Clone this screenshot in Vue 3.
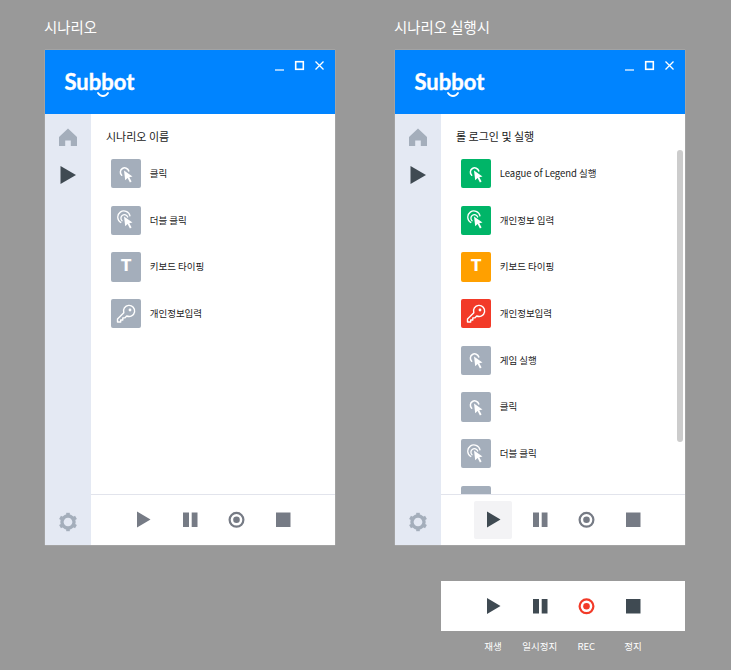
<template>
  <div class="page">
    <div class="screens">
      <section v-for="screen in screens" :key="screen.title" class="screen">
        <h2 class="screen-title">{{ screen.title }}</h2>
        <div class="window">
          <header class="titlebar">
            <div class="logo">
              <span class="logo-text">Subbot</span>
              <svg class="logo-smile" width="12" height="5" viewBox="0 0 12 5">
                <path d="M1 1c1.400 2.200 2.900 3 5 3s3.600-.8 5-3" fill="none" stroke="#fff" stroke-width="1.800" stroke-linecap="round" />
              </svg>
            </div>
            <div class="window-controls">
              <svg width="11" height="11" viewBox="0 0 11 11"><path d="M1 10h9" stroke="#fff" stroke-width="1.200" /></svg>
              <svg width="11" height="11" viewBox="0 0 11 11"><rect x="1.700" y="1.700" width="7.600" height="7.600" fill="none" stroke="#fff" stroke-width="1.600" /></svg>
              <svg width="11" height="11" viewBox="0 0 11 11"><path d="M1.500 1.500l8 8M9.500 1.500l-8 8" stroke="#fff" stroke-width="1.300" /></svg>
            </div>
          </header>

          <div class="body">
            <aside class="sidebar">
              <svg class="side-icon" width="20" height="20" viewBox="0 0 20 20">
                <path d="M10 1.500 19 10v9h-6.200v-5.500H7.200V19H1v-9z" fill="#a4aebb" />
              </svg>
              <svg class="side-icon" width="20" height="20" viewBox="0 0 20 20">
                <path d="M2.500 1 18 10 2.500 19z" fill="#3f4a52" />
              </svg>
              <svg class="side-icon gear" width="20" height="20" viewBox="0 0 20 20">
                <circle cx="10" cy="10" r="6" fill="none" stroke="#a4aebb" stroke-width="3.400" />
                <path v-for="a in [0, 60, 120]" :key="a" d="M8.200 .8h3.600v18.400H8.200z" fill="#a4aebb" :transform="`rotate(${a} 10 10)`" />
                <circle cx="10" cy="10" r="4.300" fill="#e4e9f3" />
              </svg>
            </aside>

            <main class="content">
              <div class="list-area">
                <h3 class="list-title">{{ screen.listTitle }}</h3>
                <ul class="list">
                  <li v-for="(item, i) in screen.items" :key="i" class="item">
                    <span class="item-icon" :class="item.color">
                      <svg v-if="item.icon === 'click'" width="20" height="20" viewBox="0 0 20 20">
                        <path d="M5.700 11.300A4.300 4.300 0 1 1 12.800 7" fill="none" stroke="#fff" stroke-width="1.500" stroke-linecap="round" />
                        <path d="M8 6.500 16.500 12.500l-3.200.7 2.300 4.300-1.700.9-2.300-4.300-2.400 2.200z" fill="#fff" />
                      </svg>
                      <svg v-else-if="item.icon === 'double'" width="20" height="20" viewBox="0 0 20 20">
                        <path d="M4.800 12.500A6.200 6.200 0 1 1 14 5.800" fill="none" stroke="#fff" stroke-width="1.300" stroke-linecap="round" />
                        <path d="M6 10.700A3.500 3.500 0 1 1 11.700 7" fill="none" stroke="#fff" stroke-width="1.300" stroke-linecap="round" />
                        <path d="M8 6.500 16.500 12.500l-3.200.7 2.300 4.300-1.700.9-2.300-4.300-2.400 2.200z" fill="#fff" />
                      </svg>
                      <span v-else-if="item.icon === 'text'" class="glyph-t">T</span>
                      <svg v-else-if="item.icon === 'key'" width="22" height="22" viewBox="0 0 22 22">
                        <path d="M8.800 9.800 2.500 16.100V19h3.200v-2h2.100v-2.100h2l1.900-1.900a5.600 5.600 0 1 0-2.900-3.200z" fill="none" stroke="#fff" stroke-width="1.400" stroke-linejoin="round" />
                        <circle cx="15" cy="7" r="1.400" fill="#fff" />
                      </svg>
                    </span>
                    <span class="item-label">{{ item.label }}</span>
                  </li>
                </ul>
                <div v-if="screen.scroll" class="scrollbar"></div>
              </div>

              <div class="controls">
                <button
                  v-for="c in screen.controls"
                  :key="c.name"
                  class="control"
                  :class="{ active: c.active }"
                >
                  <svg width="18" height="18" viewBox="-0.5 0.5 18 18">
                    <path v-if="c.name === 'play'" d="M2.500 1 16 9 2.500 17z" :fill="c.color" />
                    <path v-else-if="c.name === 'pause'" d="M1.500 2H7.500V16.500H1.500zM10.200 2H16V16.500H10.200z" :fill="c.color" />
                    <template v-else-if="c.name === 'rec'">
                      <circle cx="9" cy="9.300" r="6.900" fill="none" :stroke="c.color" stroke-width="2.200" />
                      <circle cx="9" cy="9.300" r="3.300" :fill="c.color" />
                    </template>
                    <path v-else d="M1.500 2H16V16.500H1.500z" :fill="c.color" />
                  </svg>
                </button>
              </div>
            </main>
          </div>
        </div>
      </section>
    </div>

    <div class="legend">
      <div class="legend-bar">
        <button v-for="c in legend" :key="c.name" class="control">
          <svg width="18" height="18" viewBox="-0.5 0 18 18">
            <path v-if="c.name === 'play'" d="M2.500 1 16 9 2.500 17z" :fill="c.color" />
            <path v-else-if="c.name === 'pause'" d="M1.500 2H7.500V16.500H1.500zM10.200 2H16V16.500H10.200z" :fill="c.color" />
            <template v-else-if="c.name === 'rec'">
              <circle cx="9" cy="9.300" r="6.900" fill="none" :stroke="c.color" stroke-width="2.200" />
              <circle cx="9" cy="9.300" r="3.300" :fill="c.color" />
            </template>
            <path v-else d="M1.500 2H16V16.500H1.500z" :fill="c.color" />
          </svg>
        </button>
      </div>
      <div class="legend-labels">
        <span v-for="c in legend" :key="c.name" class="legend-label">{{ c.label }}</span>
      </div>
    </div>
  </div>
</template>

<script setup>
const GRAY = '#767b85'
const DARK = '#3f4a52'
const RED = '#f23a28'

const idleControls = [
  { name: 'play', color: GRAY },
  { name: 'pause', color: GRAY },
  { name: 'rec', color: GRAY },
  { name: 'stop', color: GRAY }
]

const screens = [
  {
    title: '시나리오',
    listTitle: '시나리오 이름',
    scroll: false,
    controls: idleControls,
    items: [
      { icon: 'click', color: 'gray', label: '클릭' },
      { icon: 'double', color: 'gray', label: '더블 클릭' },
      { icon: 'text', color: 'gray', label: '키보드 타이핑' },
      { icon: 'key', color: 'gray', label: '개인정보입력' }
    ]
  },
  {
    title: '시나리오 실행시',
    listTitle: '롤 로그인 및 실행',
    scroll: true,
    controls: [
      { name: 'play', color: DARK, active: true },
      { name: 'pause', color: GRAY },
      { name: 'rec', color: GRAY },
      { name: 'stop', color: GRAY }
    ],
    items: [
      { icon: 'click', color: 'green', label: 'League of Legend 실행' },
      { icon: 'double', color: 'green', label: '개인정보 입력' },
      { icon: 'text', color: 'orange', label: '키보드 타이핑' },
      { icon: 'key', color: 'red', label: '개인정보입력' },
      { icon: 'click', color: 'gray', label: '게임 실행' },
      { icon: 'click', color: 'gray', label: '클릭' },
      { icon: 'double', color: 'gray', label: '더블 클릭' },
      { icon: 'none', color: 'gray', label: '' }
    ]
  }
]

const legend = [
  { name: 'play', color: DARK, label: '재생' },
  { name: 'pause', color: DARK, label: '일시정지' },
  { name: 'rec', color: RED, label: 'REC' },
  { name: 'stop', color: DARK, label: '정지' }
]
</script>

<style>
html,
body {
  background: #999;
}
</style>

<style scoped>
.page {
  width: 731px;
  height: 670px;
  overflow: hidden;
  box-sizing: border-box;
  padding: 18px 0 0 45px;
  background: #999;
  font-family: "Noto Sans CJK KR", "Noto Sans", sans-serif;
}

.screens {
  display: flex;
  gap: 60px;
}

.screen {
  width: 290px;
}

.screen-title {
  margin: 0 0 0 -1px;
  height: 32px;
  font-size: 14.4px;
  line-height: 18px;
  font-weight: 400;
  color: #fff;
}

.window {
  height: 495px;
  display: flex;
  flex-direction: column;
  background: #fff;
  box-shadow: 0 0 1px rgba(255, 255, 255, 0.6);
}

.titlebar {
  flex: none;
  height: 64px;
  display: flex;
  justify-content: space-between;
  background: #0084ff;
}

.logo {
  position: relative;
  margin: 17px 0 0 19.5px;
  height: 30px;
}

.logo-text {
  font-family: "Lato", sans-serif;
  font-weight: 700;
  font-size: 22px;
  line-height: 30px;
  -webkit-text-stroke: 0.4px #fff;
  color: #fff;
}

.logo-smile {
  position: absolute;
  left: 32px;
  top: 25px;
}

.window-controls {
  display: flex;
  gap: 9px;
  margin: 10px 10px 0 0;
  height: 11px;
}

.body {
  flex: 1;
  min-height: 0;
  display: flex;
}

.sidebar {
  flex: none;
  width: 46px;
  display: flex;
  flex-direction: column;
  align-items: center;
  padding: 13px 0 13px;
  box-sizing: border-box;
  background: #e4e9f3;
}

.side-icon {
  margin-bottom: 18px;
}

.gear {
  margin-top: auto;
  margin-bottom: 0;
}

.content {
  flex: 1;
  min-width: 0;
  display: flex;
  flex-direction: column;
}

.list-area {
  position: relative;
  flex: 1;
  min-height: 0;
  overflow: hidden;
  padding: 14px 0 0 15px;
}

.list-title {
  margin: 0 0 14px;
  font-size: 11px;
  line-height: 17px;
  font-weight: 400;
  color: #1a1a1a;
}

.list {
  list-style: none;
  margin: 0;
  padding: 0 0 0 5.33px;
  display: flex;
  flex-direction: column;
  gap: 17.33px;
}

.item {
  display: flex;
  align-items: center;
  gap: 9px;
  height: 29.33px;
}

.item-icon {
  flex: none;
  width: 29.33px;
  height: 29.33px;
  border-radius: 2px;
  display: flex;
  align-items: center;
  justify-content: center;
}

.item-icon.gray {
  background: #a4aebb;
}

.item-icon.green {
  background: #00b568;
}

.item-icon.orange {
  background: #ffa000;
}

.item-icon.red {
  background: #f23a28;
}

.glyph-t {
  font-family: "DejaVu Sans", sans-serif;
  font-weight: 700;
  font-size: 15px;
  line-height: 1;
  color: #fff;
}

.item-label {
  margin-bottom: 1px;
  font-size: 9.5px;
  line-height: 14px;
  color: #222;
}

.scrollbar {
  position: absolute;
  top: 36px;
  right: 2px;
  width: 6px;
  height: 292px;
  border-radius: 3px;
  background: #ccc;
}

.controls,
.legend-bar {
  flex: none;
  height: 50px;
  display: flex;
  align-items: center;
  justify-content: center;
  gap: 8.67px;
  box-sizing: border-box;
  background: #fff;
}

.controls {
  height: 51px;
  border-top: 1px solid #e2e4ec;
}

.control {
  width: 38px;
  height: 38px;
  padding: 0;
  border: none;
  border-radius: 2px;
  background: transparent;
  display: flex;
  align-items: center;
  justify-content: center;
}

.control.active {
  background: #f3f3f5;
}

.legend {
  width: 244px;
  margin: 36px 0 0 396px;
}

.legend-labels {
  display: flex;
  justify-content: center;
  gap: 8.67px;
  margin-top: 8px;
}

.legend-label {
  width: 38px;
  white-space: nowrap;
  display: flex;
  justify-content: center;
  font-size: 9.5px;
  line-height: 14px;
  color: #fff;
}
</style>
